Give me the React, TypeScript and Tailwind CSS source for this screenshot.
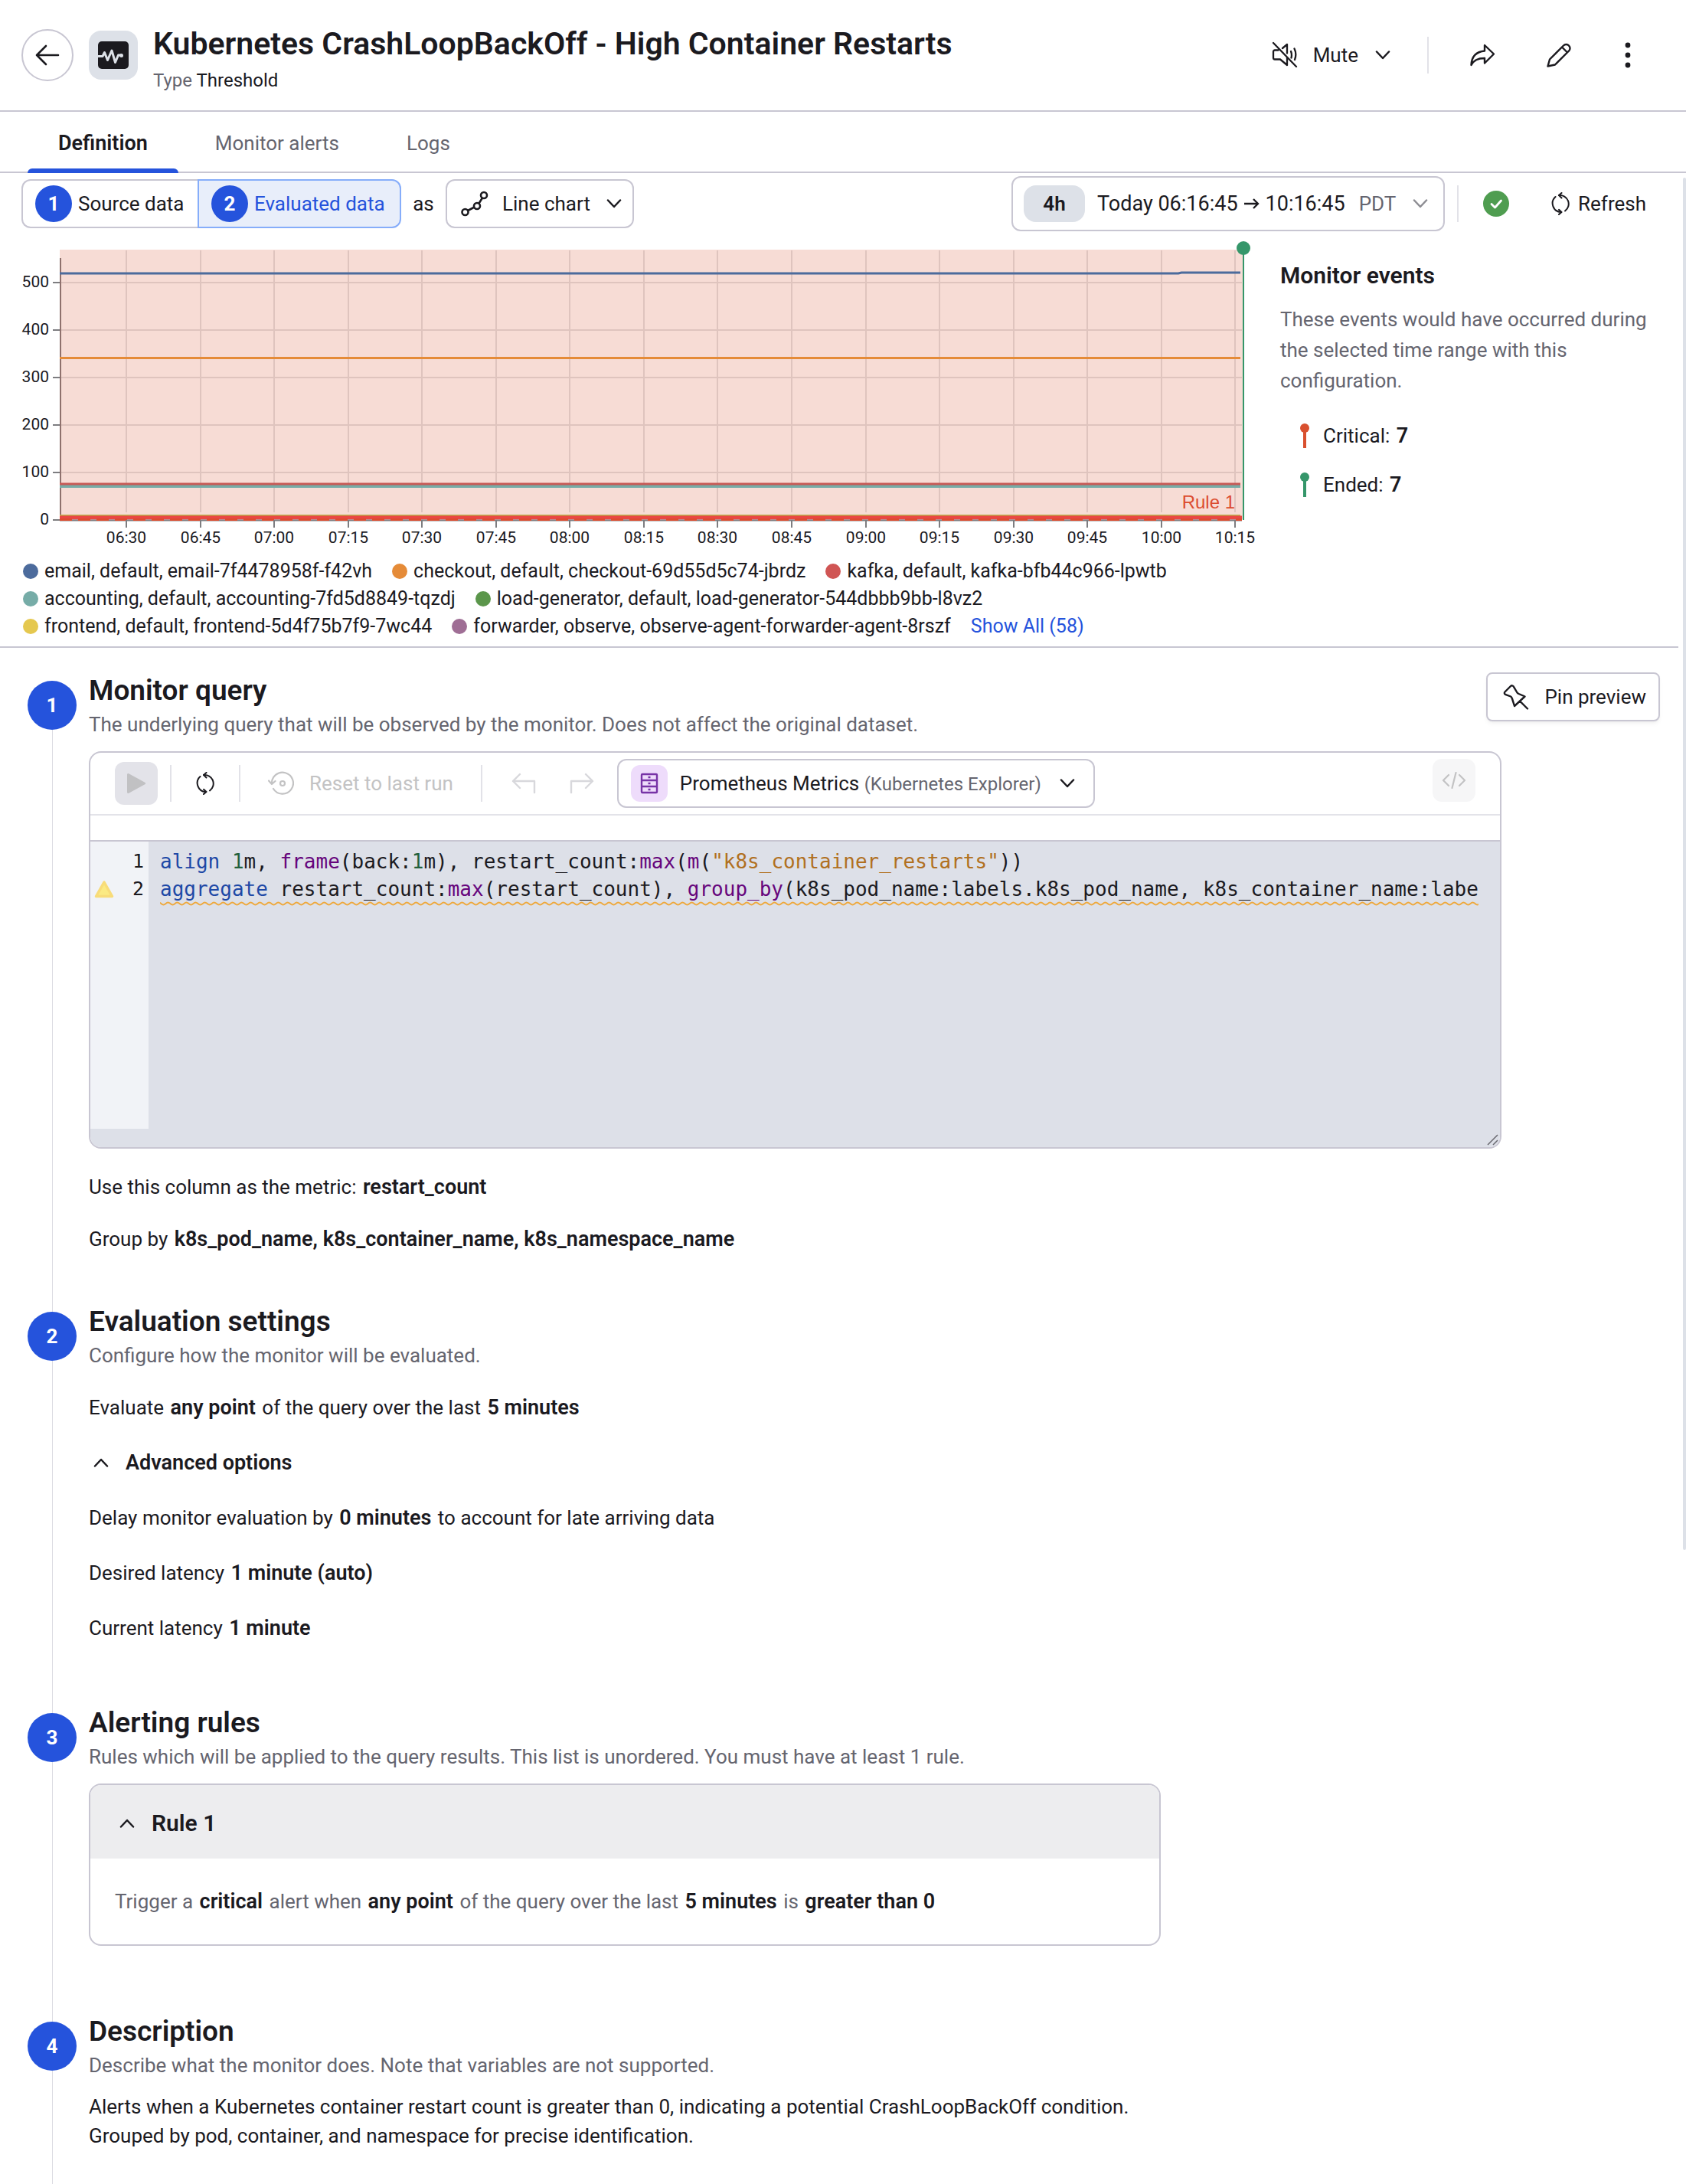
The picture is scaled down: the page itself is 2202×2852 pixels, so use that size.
import type { ReactNode } from 'react';

const series = [
  { name: 'email, default, email-7f4478958f-f42vh', dot: 'bg-[#4c6b9c]' },
  { name: 'checkout, default, checkout-69d55d5c74-jbrdz', dot: 'bg-[#e58b38]' },
  { name: 'kafka, default, kafka-bfb44c966-lpwtb', dot: 'bg-[#d05554]' },
  { name: 'accounting, default, accounting-7fd5d8849-tqzdj', dot: 'bg-[#76aca7]' },
  { name: 'load-generator, default, load-generator-544dbbb9bb-l8vz2', dot: 'bg-[#5b964b]' },
  { name: 'frontend, default, frontend-5d4f75b7f9-7wc44', dot: 'bg-[#e5c84f]' },
  { name: 'forwarder, observe, observe-agent-forwarder-agent-8rszf', dot: 'bg-[#9f6e95]' },
];

const times = [
  '06:30', '06:45', '07:00', '07:15', '07:30', '07:45', '08:00', '08:15',
  '08:30', '08:45', '09:00', '09:15', '09:30', '09:45', '10:00', '10:15',
];

const Chevron = ({ up = false, className = '' }: { up?: boolean; className?: string }) => (
  <svg viewBox="0 0 20 12" className={`w-5 h-3 shrink-0 pointer-events-none ${className}`} fill="none" stroke="currentColor" strokeWidth="2.5" strokeLinecap="round" strokeLinejoin="round" aria-hidden="true">
    <path d={up ? 'M2 10.5 10 2l8 8.5' : 'M2 1.5 10 10l8-8.5'} />
  </svg>
);

const RefreshIcon = () => (
  <svg viewBox="0 0 26 30" className="w-[26px] h-[30px] shrink-0" fill="none" stroke="currentColor" strokeWidth="2" strokeLinecap="round" strokeLinejoin="round" aria-hidden="true">
    <path d="M6.5 6A11.5 11.5 0 0 0 13.5 26M11 4.1A11.3 11.3 0 0 1 19 24.5" />
    <path d="M14.5 1 11 4.1l3.5 3.4M11 22.8l3.5 3.2-3.5 3" />
  </svg>
);

const IconButton = ({ label, className = 'w-16', children }: { label: string; className?: string; children: ReactNode }) => (
  <button type="button" aria-label={label} className={`h-16 flex items-center justify-center ${className}`}>
    {children}
  </button>
);

const Header = () => (
  <header className="h-[146px] flex items-center pl-7 pr-[54px] border-b-2 border-[#c8c6d2]">
    <button type="button" aria-label="Back" className="size-[68px] shrink-0 rounded-full border-2 border-[#c8c6d2] flex items-center justify-center">
      <svg viewBox="0 0 32 28" className="w-8 h-7" fill="none" stroke="currentColor" strokeWidth="2.6" strokeLinecap="round" strokeLinejoin="round">
        <path d="M30 14H2M14 2 2 14l12 12" />
      </svg>
    </button>
    <div className="ml-5 size-16 shrink-0 rounded-2xl bg-[#dde1e8] flex items-center justify-center">
      <svg viewBox="0 0 40 36" className="w-10 h-9">
        <rect width="40" height="36" rx="5" fill="#1b1a1f" />
        <path d="M0 19.5h6l2.5-5 4 10L18 12l4.500 15.500 4-9.500h4" fill="none" stroke="#dde1e8" strokeWidth="3" strokeLinejoin="round" />
        <circle cx="30.500" cy="18.500" r="2.500" fill="#dde1e8" />
      </svg>
    </div>
    <div className="ml-5 pt-2.5 flex-1 min-w-0">
      <h1 className="text-[41px] leading-[48px] font-semibold">Kubernetes CrashLoopBackOff - High Container Restarts</h1>
      <p className="mt-2 text-2xl leading-8"><span className="text-[#65656f]">Type</span> Threshold</p>
    </div>
    <button type="button" className="h-16 flex items-center text-[26px]">
      <svg viewBox="0 0 34 36" className="w-[34px] h-9 mr-5" fill="none" stroke="currentColor" strokeWidth="2.300" strokeLinecap="round" strokeLinejoin="round">
        <path d="M2 2 32 33M8.500 11.500H4a2 2 0 0 0-2 2v8a2 2 0 0 0 2 2h7l9 7.500V21M14 9l6-5v11.500M25 13c1 2.500 1.200 5.500.5 8.500M29.500 9.500c2.200 4.500 2.200 10 .5 14.500" />
      </svg>
      Mute
      <Chevron className="ml-[22px]" />
    </button>
    <div className="ml-12 mr-[38px] w-0.5 h-12 bg-[#e2e2e8]" />
    <div className="flex items-center gap-9">
      <IconButton label="Share">
        <svg viewBox="0 0 32 30" className="w-8 h-[30px]" fill="none" stroke="currentColor" strokeWidth="2.400" strokeLinecap="round" strokeLinejoin="round">
          <path d="M19 2v7.500C8.500 10.500 2 16 1.500 28 4.500 21.500 10 19 19 19v6.500L31 13.500z" />
        </svg>
      </IconButton>
      <IconButton label="Edit">
        <svg viewBox="0 0 32 32" className="size-8" fill="none" stroke="currentColor" strokeWidth="2.400" strokeLinecap="round" strokeLinejoin="round">
          <path d="M1.500 30.500 4 21.500 22 3.500a4.800 4.800 0 0 1 7 0 4.800 4.800 0 0 1 0 7L11 28.500zM20 5.500l7 7" />
        </svg>
      </IconButton>
      <IconButton label="More actions" className="w-11">
        <svg viewBox="0 0 8 34" className="w-2 h-[34px]" fill="currentColor">
          <circle cx="4" cy="4" r="3.400" /><circle cx="4" cy="17" r="3.400" /><circle cx="4" cy="30" r="3.400" />
        </svg>
      </IconButton>
    </div>
  </header>
);

const Tabs = () => (
  <nav className="h-20 pt-1 flex gap-2 pl-9 border-b-2 border-[#c8c6d2] text-[26px]">
    <a href="#definition" aria-current="page" className="-mb-0.5 px-10 flex flex-col text-[27px] font-semibold">
      <span className="flex-1 flex items-center pt-1">Definition</span>
      <span className="-mx-10 h-1.5 rounded-t-md bg-[#2553dc]" />
    </a>
    <a href="#alerts" className="px-10 flex items-center text-[#65656f]">Monitor alerts</a>
    <a href="#logs" className="px-10 flex items-center text-[#65656f]">Logs</a>
  </nav>
);

const Num = ({ children }: { children: ReactNode }) => (
  <span className="size-12 shrink-0 rounded-full bg-[#2553dc] text-white font-bold flex items-center justify-center">{children}</span>
);

const PreviewBar = () => (
  <div className="flex items-center pt-1 pl-7 pr-[52px] text-[26px]">
    <div className="flex h-16">
      <button type="button" className="w-[230px] flex items-center gap-2 pl-4 rounded-l-xl border-2 border-r-0 border-[#c8c6d2] whitespace-nowrap">
        <Num>1</Num>Source data
      </button>
      <button type="button" aria-pressed="true" className="w-[266px] flex items-center gap-2 pl-4 rounded-r-xl border-2 border-[#86adfa] bg-[#e8eefa] text-[#2553dc] whitespace-nowrap">
        <Num>2</Num>Evaluated data
      </button>
    </div>
    <label htmlFor="chart-type" className="w-[58px] text-center">as</label>
    <div className="h-16 w-[246px] flex items-center pl-[18px] pr-3.5 rounded-xl border-2 border-[#c8c6d2]">
      <svg viewBox="0 0 36 34" className="w-9 h-[34px] shrink-0" fill="none" stroke="currentColor" strokeWidth="2.600" aria-hidden="true">
        <circle cx="5.500" cy="28" r="4" /><circle cx="21" cy="20" r="4" /><circle cx="30" cy="6" r="4" />
        <path d="m9 26 8.500-4.500M23.500 16.500 28 9.500" />
      </svg>
      <select id="chart-type" className="appearance-none bg-transparent ml-[18px] flex-1 min-w-0" defaultValue="line">
        <option value="line">Line chart</option>
      </select>
      <Chevron />
    </div>
    <div className="ml-auto flex items-center">
      <button type="button" className="h-[72px] w-[566px] flex items-center px-3.5 rounded-xl border-2 border-[#c8c6d2] text-[27px] whitespace-nowrap">
        <span className="w-20 h-12 rounded-2xl bg-[#dde1e8] text-[26px] font-semibold flex items-center justify-center">4h</span>
        <span className="ml-4">Today 06:16:45</span>
        <svg viewBox="0 0 20 14" className="w-5 h-3.5 mx-2" fill="none" stroke="currentColor" strokeWidth="2.300" aria-hidden="true">
          <path d="M0 7h18M12 1l6 6-6 6" />
        </svg>
        <span>10:16:45</span>
        <span className="ml-[18px] text-[26px] text-[#65656f]">PDT</span>
        <Chevron className="ml-auto mr-1.5 text-[#8d8d93]" />
      </button>
      <div className="mx-4 w-0.5 h-12 bg-[#e2e2e8]" />
      <svg viewBox="0 0 34 34" className="ml-4 size-[34px]" role="img" aria-label="Up to date">
        <circle cx="17" cy="17" r="17" fill="#4f9d50" />
        <path d="m11 17.500 4.500 4.500 8-9" fill="none" stroke="#fff" strokeWidth="2.800" strokeLinecap="round" strokeLinejoin="round" />
      </svg>
      <button type="button" className="h-16 ml-[54px] flex items-center gap-2.5">
        <RefreshIcon />Refresh
      </button>
    </div>
  </div>
);

const x = (i: number) => 165 + Math.round(i * 96.55);

const Chart = () => (
  <svg viewBox="0 0 1660 422" className="w-full h-auto" role="img" aria-label="Restart count by container">
    <rect x="78" y="24" width="1546" height="352" fill="#f7dcd5" />
    <g stroke="#dfc4be" strokeWidth="2">
      {times.map((t, i) => <path key={t} d={`M${x(i)} 25V367`} />)}
      {[1, 2, 3, 4, 5].map((n) => <path key={n} d={`M78 ${377 - n * 62}H1622`} />)}
    </g>
    <path d="M79 35v342" stroke="#8f716d" strokeWidth="2" />
    <path d="M78 55H1539L1543 54H1620" fill="none" stroke="#4c6b9c" strokeWidth="3" />
    <path d="M78 165.500H1620" stroke="#e58b38" strokeWidth="3" />
    <path d="M78 333H1620" stroke="#76aca7" strokeWidth="4" />
    <path d="M78 330H1620" stroke="#c65a56" strokeWidth="3" />
    <path d="M78 371H1620" stroke="#bdb04e" strokeWidth="2" />
    <path d="M78 374H1622" stroke="#ea4743" strokeWidth="5" />
    <path d="M78 377.500H1622" stroke="#7d7d80" strokeWidth="2" />
    <path d="M78 376.500H1622" stroke="#dc4c2f" strokeWidth="3" strokeDasharray="16 8" />
    <g stroke="#7d7d80" strokeWidth="2">
      {times.map((t, i) => <path key={t} d={`M${x(i)} 377v10`} />)}
      {[0, 1, 2, 3, 4, 5].map((n) => <path key={n} d={`M69 ${377 - n * 62}h9`} />)}
    </g>
    <g fontSize="21" fill="#1b1a1f">
      {times.map((t, i) => <text key={t} x={x(i)} y="407" textAnchor="middle">{t}</text>)}
      {[0, 1, 2, 3, 4, 5].map((n) => <text key={n} x="64" y={383 - n * 62} textAnchor="end">{n * 100}</text>)}
    </g>
    <text x="1613" y="362" textAnchor="end" fontSize="24" fill="#dc4c2f" className="font-['Liberation_Sans',sans-serif]">Rule 1</text>
    <path d="M1624 22V377" stroke="#35966a" strokeWidth="2" />
    <circle cx="1624" cy="22" r="9" fill="#35966a" />
  </svg>
);

const Legend = () => (
  <ul className="pl-[30px] pb-2 flex flex-wrap gap-x-[26px] text-[25px] leading-9">
    {series.map((s) => (
      <li key={s.name} className="flex items-center gap-2">
        <span className={`size-5 rounded-full ${s.dot}`} />
        {s.name}
      </li>
    ))}
    <li><button type="button" className="text-[#2553dc]">Show All (58)</button></li>
  </ul>
);

const EventCount = ({ label, color, count }: { label: string; color: string; count: number }) => (
  <li className="flex items-center gap-[18px]">
    <svg viewBox="0 0 12 32" className={`w-3 h-8 ${color}`} fill="currentColor" aria-hidden="true">
      <circle cx="6" cy="6" r="6" /><path d="M4 6h4v26H4z" />
    </svg>
    <span>{label}: <B>{count}</B></span>
  </li>
);

const Preview = () => (
  <section className="flex mr-2.5 border-b-2 border-[#c8c6d2]">
    <div className="flex-1 min-w-0">
      <Chart />
      <div className="pt-1"><Legend /></div>
    </div>
    <aside className="w-[532px] shrink-0 pl-3 pt-[38px] text-[26px]">
      <h2 className="text-[30px] leading-10 font-semibold">Monitor events</h2>
      <p className="mt-[17px] leading-10 text-[#65656f] max-w-[500px]">
        These events would have occurred during the selected time range with this configuration.
      </p>
      <ul className="mt-8 pl-[26px] flex flex-col gap-6 leading-10">
        <EventCount label="Critical" color="text-[#d9502f]" count={7} />
        <EventCount label="Ended" color="text-[#35966a]" count={7} />
      </ul>
    </aside>
  </section>
);

const Step = ({ n, title, hint, action, gap, children }: { n: number; title: string; hint: string; action?: ReactNode; gap: string; children: ReactNode }) => (
  <li className="flex gap-4">
    <div className="w-16 shrink-0 flex flex-col items-center">
      <span className={`w-px h-[11px] ${n > 1 ? 'bg-[#dcdce2]' : ''}`} />
      <span className="size-16 shrink-0 rounded-full bg-[#2553dc] text-white text-[26px] font-bold flex items-center justify-center">{n}</span>
      <span className="w-px flex-1 bg-[#dcdce2]" />
    </div>
    <div className={`flex-1 min-w-0 ${gap}`}>
      <div className="flex items-start justify-between">
        <div>
          <h2 className="pt-0.5 text-[37px] leading-[44px] font-semibold">{title}</h2>
          <p className="mt-0.5 leading-10 text-[#65656f]">{hint}</p>
        </div>
        {action}
      </div>
      {children}
    </div>
  </li>
);

const B = ({ children }: { children: ReactNode }) => <strong className="mx-0.5 text-[27px] font-semibold">{children}</strong>;
const K = ({ children }: { children: ReactNode }) => <span className="text-[#1d48a6]">{children}</span>;
const F = ({ children }: { children: ReactNode }) => <span className="text-[#66057c]">{children}</span>;
const N = ({ children }: { children: ReactNode }) => <span className="text-[#23613c]">{children}</span>;

const PinButton = () => (
  <button type="button" className="h-16 shrink-0 pl-5 pr-4 flex items-center gap-5 rounded-lg border-2 border-[#c8c6d2] shadow-md shadow-black/5 bg-white">
    <svg viewBox="0 0 34 34" className="size-[34px]" fill="none" stroke="currentColor" strokeWidth="2.400" strokeLinecap="round" strokeLinejoin="round" aria-hidden="true">
      <path d="M10 3 2.500 10.500c-1 1-.8 2.600.5 3.300L10 16.500c1 .5 1.500 1.500 2 3L15 29 28.500 16.500 20.500 13c-1-.5-1.800-1-2.300-2L14 3.800c-.8-1.600-2.800-2-4-.8zM22 22.500 32 32.500" />
    </svg>
    Pin preview
  </button>
);

const EditorToolbar = () => (
  <div className="h-[82px] pl-8 pr-8 flex items-center border-b-2 border-[#e3e3e9]">
    <button type="button" disabled aria-label="Run" className="size-14 shrink-0 rounded-xl bg-[#e3e3e9] flex items-center justify-center">
      <svg viewBox="0 0 26 28" className="w-[26px] h-7" fill="#c1c1c3" stroke="#c1c1c3" strokeWidth="3" strokeLinejoin="round"><path d="M2.500 2.500v23L23.500 14z" /></svg>
    </button>
    <div className="ml-4 w-0.5 h-12 bg-[#e2e2e8]" />
    <IconButton label="Refresh query" className="w-[88px]"><RefreshIcon /></IconButton>
    <div className="w-0.5 h-12 bg-[#e2e2e8]" />
    <button type="button" disabled className="px-9 flex items-center gap-5 text-[#c3c3c4]">
      <svg viewBox="0 0 34 32" className="w-[34px] h-8" fill="none" stroke="currentColor" strokeWidth="2.200" strokeLinecap="round" strokeLinejoin="round" aria-hidden="true">
        <path d="M5 17A14 14 0 1 1 7 23M1 12.500l4 4.500 4.500-4" /><circle cx="19" cy="16" r="3" />
      </svg>
      Reset to last run
    </button>
    <div className="w-0.5 h-12 bg-[#e2e2e8]" />
    <div className="ml-[30px] mr-[22px] flex gap-7 text-[#d8d8dc]">
      <IconButton label="Undo" className="w-12">
        <svg viewBox="0 0 32 28" className="w-8 h-7" fill="none" stroke="currentColor" strokeWidth="2.400" strokeLinecap="round" strokeLinejoin="round"><path d="M30 26V11H2M11 2l-9 9 9 9" /></svg>
      </IconButton>
      <IconButton label="Redo" className="w-12">
        <svg viewBox="0 0 32 28" className="w-8 h-7" fill="none" stroke="currentColor" strokeWidth="2.400" strokeLinecap="round" strokeLinejoin="round"><path d="M2 26V11H30M21 2l9 9-9 9" /></svg>
      </IconButton>
    </div>
    <button type="button" aria-haspopup="listbox" className="h-16 pl-4 pr-6 flex items-center rounded-xl border-2 border-[#c8c6d2] whitespace-nowrap">
      <span className="size-12 rounded-xl bg-[#eedcfb] flex items-center justify-center text-[#7733a6]">
        <svg viewBox="0 0 26 28" className="w-[26px] h-7" fill="none" stroke="currentColor" strokeWidth="2.400" strokeLinejoin="round">
          <path d="M4 2h18a1 1 0 0 1 1 1v22a1 1 0 0 1-1 1H4a1 1 0 0 1-1-1V3a1 1 0 0 1 1-1zM3 10h20M3 18h20M11.500 6h3M11.500 14h3M11.500 22h3" />
        </svg>
      </span>
      <span className="ml-4 mr-6">Prometheus Metrics <span className="text-2xl text-[#65656f]">(Kubernetes Explorer)</span></span>
      <Chevron />
    </button>
    <button type="button" disabled aria-label="View code" className="ml-auto mb-2 size-14 rounded-xl bg-[#f6f6f7] flex items-center justify-center text-[#c3c3c4]">
      <svg viewBox="0 0 32 24" className="w-8 h-6" fill="none" stroke="currentColor" strokeWidth="2.200" strokeLinecap="round" strokeLinejoin="round"><path d="M9 5 2 12l7 7M23 5l7 7-7 7M18.500 2l-5 20" /></svg>
    </button>
  </div>
);

const Editor = () => (
  <div className="mt-[15px] mr-[207px] rounded-2xl border-2 border-[#c8c6d2] overflow-hidden">
    <EditorToolbar />
    <div className="h-8" />
    <div className="relative border-t-2 border-[#c8c6d2] bg-[#dde0e8] pb-6 font-['DejaVu_Sans_Mono',monospace] text-[26px] leading-9">
      <div className="flex min-h-[375px]">
        <div className="w-[76px] shrink-0 pt-2 pr-1.5 bg-[#f1f3f7] text-[25px]">
          <div className="text-right">1</div>
          <div className="flex items-center justify-between pl-[5px]">
            <svg viewBox="0 0 26 24" className="w-[26px] h-6" role="img" aria-label="Warning">
              <path d="M13 3 2.500 21.500h21z" fill="#fbea83" stroke="#f8dc79" strokeWidth="3.500" strokeLinejoin="round" />
            </svg>
            2
          </div>
        </div>
        <pre className="flex-1 min-w-0 pt-2 pl-[15px] overflow-hidden">
          <code className="block font-['DejaVu_Sans_Mono',monospace]"><K>align</K> <N>1</N>m, <F>frame</F>(back:<N>1</N>m), restart_count:<F>max</F>(<F>m</F>(<span className="text-[#b1701f]">"k8s_container_restarts"</span>))</code>
          <code className="relative block w-max font-['DejaVu_Sans_Mono',monospace]">
            <K>aggregate</K> restart_count:<F>max</F>(restart_count), <F>group_by</F>(k8s_pod_name:labels.k8s_pod_name, k8s_container_name:labe
            <svg className="absolute left-0 top-[34px] w-full h-1.5" aria-hidden="true">
              <defs>
                <pattern id="wave" width="12" height="6" patternUnits="userSpaceOnUse">
                  <path d="M-3 1.500Q0 1.500 1.500 3T4.500 4.500 7.500 3 10.500 1.500 13.500 3" fill="none" stroke="#eea83c" strokeWidth="1.800" />
                </pattern>
              </defs>
              <rect width="100%" height="6" fill="url(#wave)" />
            </svg>
          </code>
        </pre>
      </div>
      <svg viewBox="0 0 16 16" className="absolute right-0.5 bottom-0.5 size-4" stroke="#6a6a70" strokeWidth="1.500" aria-hidden="true">
        <path d="M2 15 15 2M9 15l6-6" />
      </svg>
    </div>
  </div>
);

const App = () => {
  return (
    <main className="relative bg-white text-[#1b1a1f] font-['Roboto',sans-serif]">
      <Header />
      <Tabs />
      <PreviewBar />
      <Preview />
      <ol className="pt-8 pl-9 pr-[34px] text-[26px] leading-10">
        <Step n={1} title="Monitor query" hint="The underlying query that will be observed by the monitor. Does not affect the original dataset." action={<PinButton />} gap="pb-16">
          <Editor />
          <p className="mt-[30px]">Use this column as the metric: <B>restart_count</B></p>
          <p className="mt-7">Group by <B>k8s_pod_name, k8s_container_name, k8s_namespace_name</B></p>
        </Step>
        <Step n={2} title="Evaluation settings" hint="Configure how the monitor will be evaluated." gap="pb-20">
          <p className="mt-7">Evaluate <B>any point</B> of the query over the last <B>5 minutes</B></p>
          <button type="button" aria-expanded="true" className="mt-8 ml-1.5 flex items-center gap-[22px] text-[27px] font-semibold">
            <Chevron up />Advanced options
          </button>
          <p className="mt-8">Delay monitor evaluation by <B>0 minutes</B> to account for late arriving data</p>
          <p className="mt-8">Desired latency <B>1 minute (auto)</B></p>
          <p className="mt-8">Current latency <B>1 minute</B></p>
        </Step>
        <Step n={3} title="Alerting rules" hint="Rules which will be applied to the query results. This list is unordered. You must have at least 1 rule." gap="pb-[88px]">
          <div className="mt-[15px] max-w-[1400px] rounded-2xl border-2 border-[#c8c6d2] overflow-hidden">
            <button type="button" aria-expanded="true" className="w-full h-24 pl-[38px] pt-1 flex items-center gap-[22px] bg-[#ededef] text-[30px] font-semibold">
              <Chevron up />Rule 1
            </button>
            <p className="py-9 pl-8 text-[#65656f] [&_strong]:text-[#1b1a1f]">
              Trigger a <B>critical</B> alert when <B>any point</B> of the query over the last <B>5 minutes</B> is <B>greater than 0</B>
            </p>
          </div>
        </Step>
        <Step n={4} title="Description" hint="Describe what the monitor does. Note that variables are not supported." gap="pb-11">
          <p className="mt-[15px] leading-[38px] max-w-[1400px]">
            Alerts when a Kubernetes container restart count is greater than 0, indicating a potential CrashLoopBackOff condition. Grouped by pod, container, and namespace for precise identification.
          </p>
        </Step>
      </ol>
      {/* scroll thumb */}
      <div className="absolute right-0 top-[232px] w-1 h-[1792px] rounded-full bg-[#dde1e8]" />
    </main>
  );
};

export default App;
